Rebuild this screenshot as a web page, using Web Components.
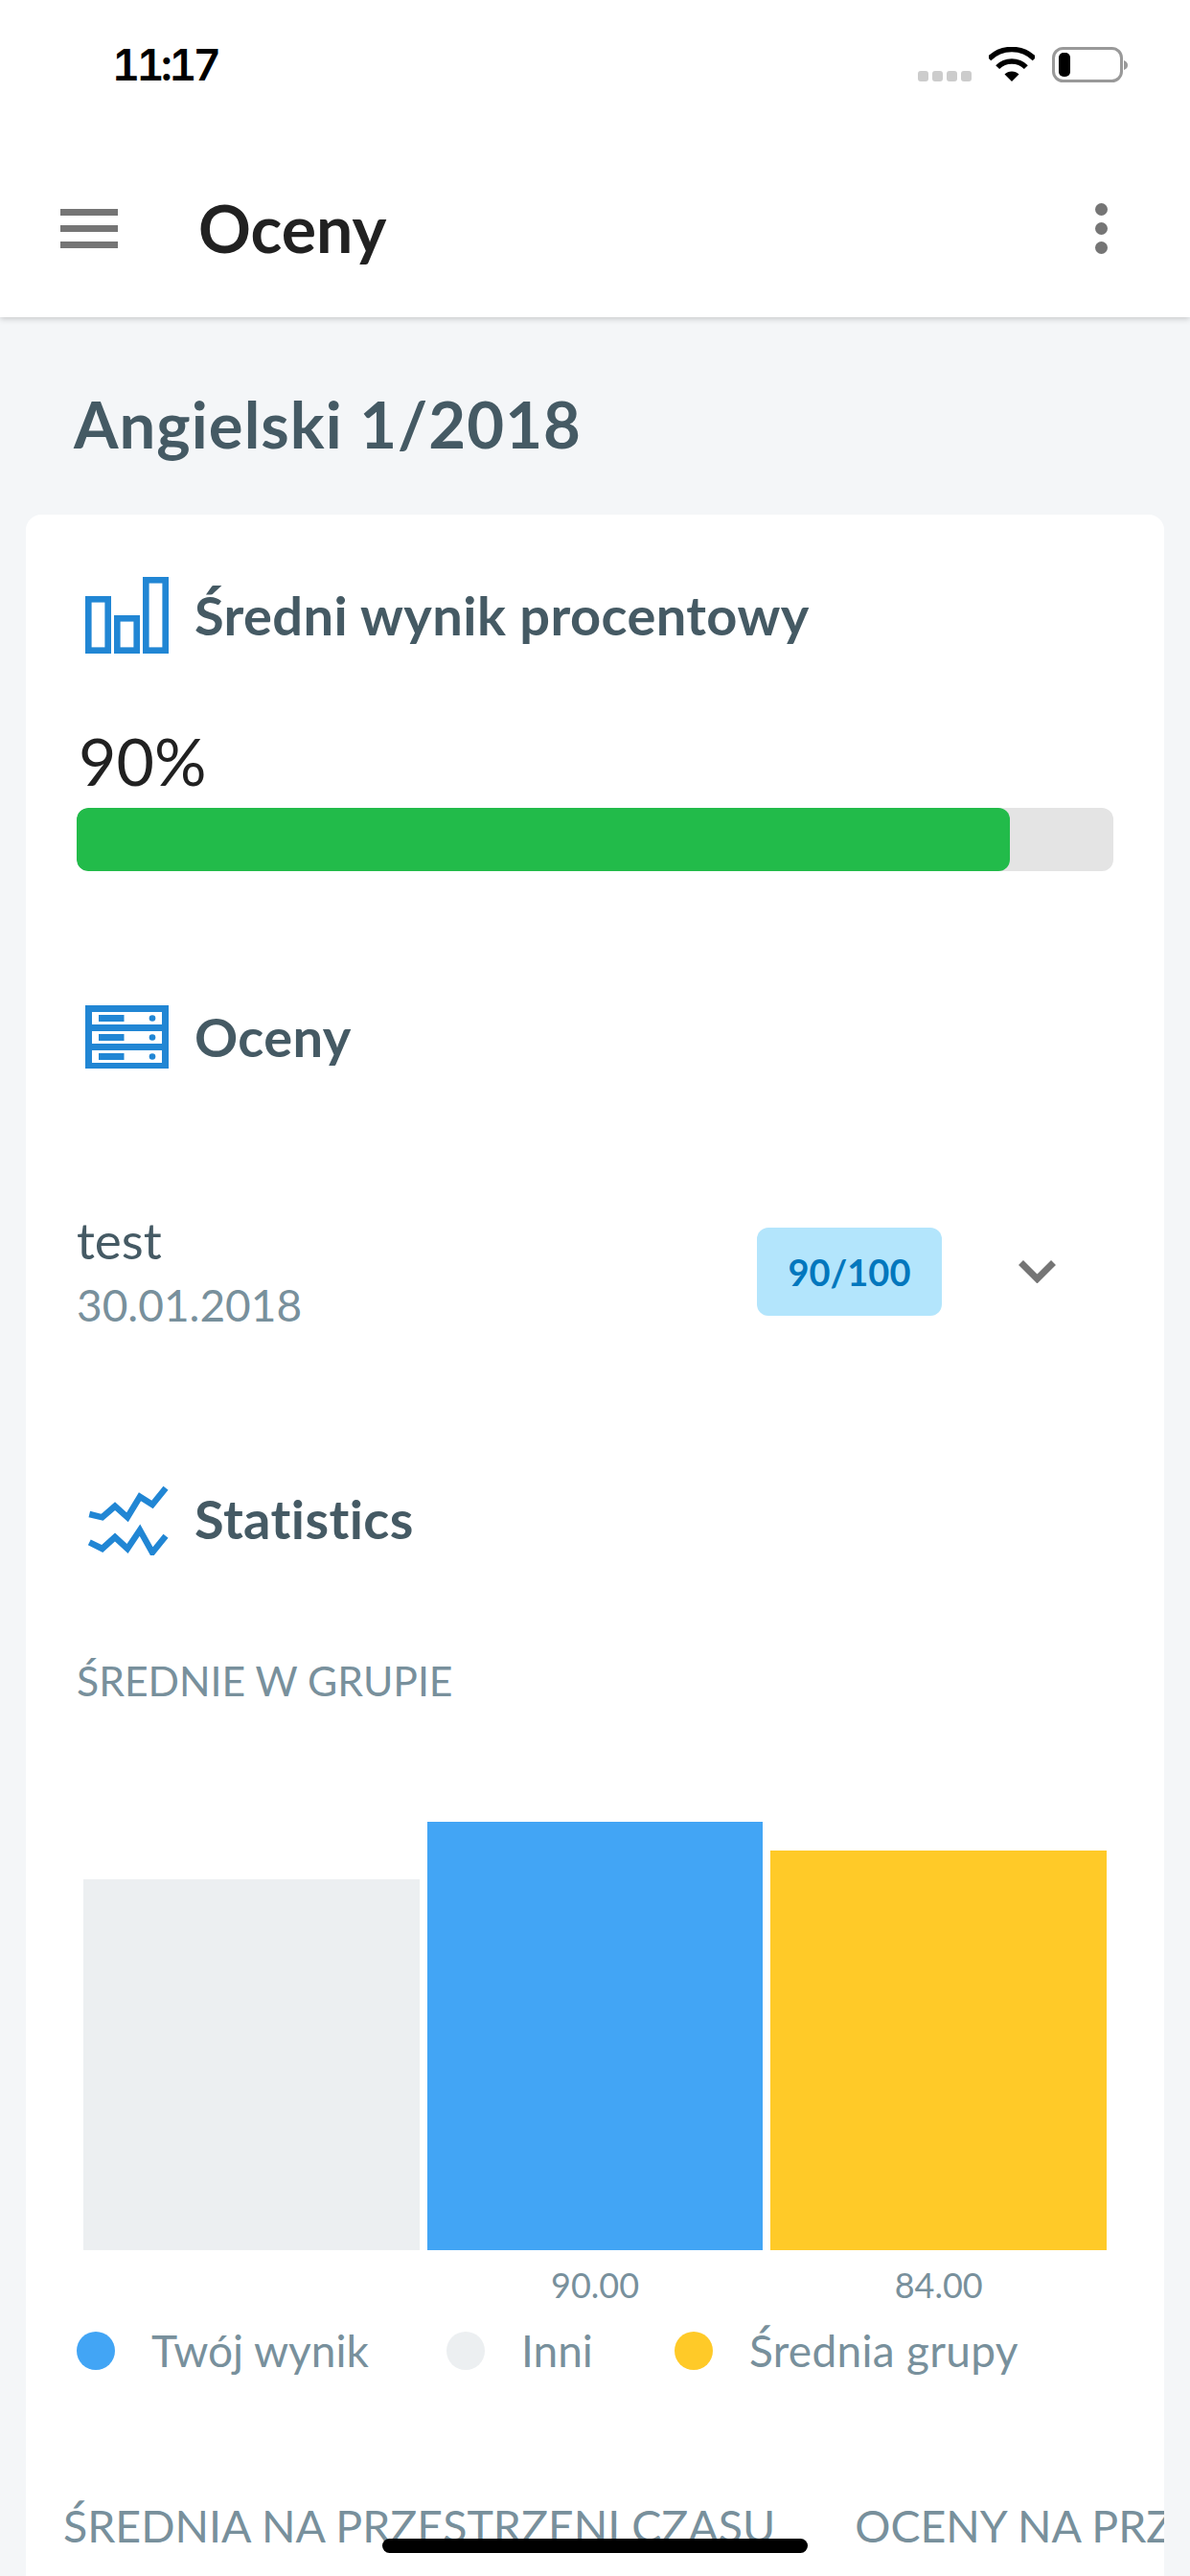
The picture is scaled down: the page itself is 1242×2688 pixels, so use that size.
<!DOCTYPE html>
<html lang="pl"><head><meta charset="utf-8"><title>Oceny</title>
<style>
html,body{margin:0;padding:0}
body{width:1242px;height:2688px;overflow:hidden;background:#f4f6f8;font-family:Lato,"Liberation Sans",sans-serif;position:relative;font-variant-ligatures:none}
</style></head><body>
<grades-screen>
  <ios-status time="11:17"></ios-status>
  <app-bar title="Oceny"></app-bar>
  <page-heading>Angielski 1/2018</page-heading>
  <app-card>
    <section-head style="height:100px;margin-top:55px">
      <svg slot="icon" width="87" height="80" viewBox="0 0 87 80" fill="none" stroke="#2186d4" stroke-width="6.6"><rect x="3.3" y="23.3" width="20.4" height="53.4"/><rect x="33.3" y="43.3" width="20.4" height="33.4"/><rect x="63.3" y="3.3" width="20.4" height="73.4"/></svg>
      Średni wynik procentowy
    </section-head>
    <score-bar value="90" style="margin-top:62px"></score-bar>
    <section-head style="height:100px;margin-top:123px">
      <svg slot="icon" width="87" height="66" viewBox="0 0 87 66"><rect width="87" height="66" fill="#2186d4"/><g fill="#fff"><rect x="7" y="7" width="73" height="13"/><rect x="7" y="27" width="73" height="13"/><rect x="7" y="47" width="73" height="13"/></g><g fill="#2186d4"><rect x="14" y="10" width="26.500" height="7"/><rect x="14" y="30" width="26.500" height="7"/><rect x="14" y="50" width="26.500" height="7"/><circle cx="70" cy="13.500" r="3.300"/><circle cx="70" cy="33.500" r="3.300"/><circle cx="70" cy="53.500" r="3.300"/></g></svg>
      Oceny
    </section-head>
    <grade-row name="test" date="30.01.2018" score="90/100" style="margin-top:132px"></grade-row>
    <section-head style="height:100px;margin-top:145px">
      <svg slot="icon" width="87" height="76" viewBox="0 0 87 76" fill="none" stroke="#2186d4" stroke-width="6.500"><polyline points="4.300,33 17.700,36.300 31,24.700 44,36.300 57,14.700 70,23 84,5.700"/><polyline points="4.300,62.300 17.700,69 31,57 44,69 57,49.700 70,73 84,55.700"/></svg>
      Statistics
    </section-head>
    <sub-label style="margin-top:94px">ŚREDNIE W GRUPIE</sub-label>
    <bar-chart style="margin-top:121px">
      <chart-bar height="387" color="#eceff1"></chart-bar>
      <chart-bar height="447" color="#42a5f5" label="90.00"></chart-bar>
      <chart-bar height="417" color="#ffca28" label="84.00"></chart-bar>
    </bar-chart>
    <chart-legend style="margin-top:13px">
      <legend-item color="#42a5f5" style="width:386px">Twój wynik</legend-item>
      <legend-item color="#eceff1" style="width:238px">Inni</legend-item>
      <legend-item color="#ffca28" style="letter-spacing:.3px">Średnia grupy</legend-item>
    </chart-legend>
    <tab-strip style="margin-top:122px">
      <span>ŚREDNIA NA PRZESTRZENI CZASU</span>
      <span>OCENY NA PRZESTRZENI CZASU</span>
    </tab-strip>
  </app-card>
</grades-screen>
<home-indicator></home-indicator>
<script>
const def=(name,css,html)=>customElements.define(name,class extends HTMLElement{
  constructor(){super();this.attachShadow({mode:'open'}).innerHTML='<style>'+css+'</style>'+(typeof html==='function'?'':html);}
  connectedCallback(){ if(typeof html==='function'){const s=this.shadowRoot.querySelector('style');this.shadowRoot.innerHTML='';this.shadowRoot.append(s);this.shadowRoot.append(document.createRange().createContextualFragment(html(this)));} }
});
def('grades-screen',':host{display:flex;flex-direction:column;height:2688px;overflow:hidden}','<slot></slot>');
def('ios-status',`:host{display:flex;height:132px;background:#fff;box-sizing:border-box;padding:44px 65px 0 117px;justify-content:space-between;align-items:flex-start;position:relative;z-index:1}
 .t{font:600 45px/48px Inter,"Liberation Sans",sans-serif;color:#000;font-variant-numeric:tabular-nums;font-feature-settings:"tnum";letter-spacing:-3.7px}
 .r{display:flex;align-items:flex-start;margin-top:5px}
 .sig{display:flex;gap:4px;margin-top:25px;margin-right:18px}.sig i{width:11px;height:11px;border-radius:3px;background:#ccc}
 svg{display:block}`,
 el=>`<span class="t">${el.getAttribute('time')}</span><div class="r"><div class="sig"><i></i><i></i><i></i><i></i></div>
 <svg width="48" height="36" viewBox="0 0 48 36" style="margin-right:18px"><g fill="none" stroke="#000" stroke-width="5.500"><path d="M.3 12.300A33.500 33.500 0 0 1 47.700 12.300"/><path d="M9.150 21.150A21 21 0 0 1 38.850 21.150"/></g><path d="M24 36 16.500 28.500A10.600 10.600 0 0 1 31.500 28.500Z"/></svg>
 <svg width="79" height="37" viewBox="0 0 79 37"><rect x="1.500" y="1.500" width="71" height="34" rx="10" fill="none" stroke="#999" stroke-width="3"/><rect x="7" y="6" width="12" height="25" rx="5"/><path d="M75 14c3 1 4 3 4 5s-1 4-4 5z" fill="#999"/></svg></div>`);
def('app-bar',`:host{display:flex;height:199px;background:#fff;align-items:center;box-sizing:border-box;padding:13px 0 0 63px;position:relative;box-shadow:0 2px 6px rgba(0,0,0,.18)}
 .m{display:flex;flex-direction:column;gap:10px;width:60px;margin-right:84px}.m i{height:7px;background:#757575;display:block}
 h1{margin:0;font:700 68px/70px Lato,sans-serif;color:#212121;flex:1}
 .d{display:flex;flex-direction:column;gap:7px;margin-right:86px}.d i{width:13px;height:13px;border-radius:50%;background:#757575;display:block}`,
 el=>`<div class="m"><i></i><i></i><i></i></div><h1>${el.getAttribute('title')}</h1><div class="d"><i></i><i></i><i></i></div>`);
def('page-heading',`:host{display:block;font:700 67px/80px Lato,sans-serif;color:#455a64;padding:71px 0 0 77px;height:206px;box-sizing:border-box;letter-spacing:1.05px}`,'<slot></slot>');
def('app-card',`:host{display:flow-root;margin:0 27px;background:#fff;border-radius:16px 16px 0 0;flex:1;overflow:hidden}`,'<slot></slot>');
def('section-head',`:host{display:flex;align-items:center;padding-left:62px;font:700 56px/70px Lato,sans-serif;color:#455a64;letter-spacing:.4px}
 .i{width:114px;flex:none;display:flex}`,'<div class="i"><slot name="icon"></slot></div><slot></slot>');
def('score-bar',`:host{display:block;padding:0 53px}
 .v{font:400 68px/80px Lato,sans-serif;color:#212121;margin-left:2px}
 .b{height:66px;background:#e4e4e4;border-radius:12px;overflow:hidden;margin-top:9px}.f{height:100%;background:#22bb4a;border-radius:12px}`,
 el=>`<div class="v">${el.getAttribute('value')}%</div><div class="b"><div class="f" style="width:${el.getAttribute('value')}%"></div></div>`);
def('grade-row',`:host{display:flex;align-items:center;padding-left:53px}
 .t{flex:1}.n{font:400 53px/60px Lato,sans-serif;color:#455a64}.d{font:400 46px/56px Lato,sans-serif;color:#78909c;margin-top:10px}
 .s{width:193px;height:92px;background:#b3e5fc;border-radius:12px;display:flex;align-items:center;justify-content:center;font:700 38px/1 Lato,sans-serif;color:#0277bd}
 svg{margin:0 113px 0 80px;display:block}`,
 el=>`<div class="t"><div class="n">${el.getAttribute('name')}</div><div class="d">${el.getAttribute('date')}</div></div><div class="s">${el.getAttribute('score')}</div><svg width="39" height="24" viewBox="0 0 39 24" fill="none" stroke="#757575" stroke-width="7"><path d="M2.500 2.500 19.500 19.500 36.500 2.500"/></svg>`);
def('sub-label',`:host{display:block;padding-left:53px;font:400 42.7px/50px Lato,sans-serif;color:#78909c}`,'<slot></slot>');
def('bar-chart',`:host{display:flex;align-items:flex-end;gap:8px;padding:0 60px;height:510px}`,'<slot></slot>');
def('chart-bar',`:host{flex:1;display:flex;flex-direction:column;justify-content:flex-end;align-items:stretch}
 .l{height:62px;box-sizing:border-box;padding-top:5px;font:400 36px/62px Lato,sans-serif;color:#78909c;text-align:center}`,
 el=>`<div style="height:${el.getAttribute('height')}px;background:${el.getAttribute('color')}"></div><div class="l">${el.getAttribute('label')||''}</div>`);
def('chart-legend',`:host{display:flex;align-items:center;padding-left:53px;height:60px}`,'<slot></slot>');
def('legend-item',`:host{display:flex;align-items:center;font:400 46px/60px Lato,sans-serif;color:#78909c;flex:none}
 i{width:40px;height:40px;border-radius:50%;margin-right:38px;display:block}`,
 el=>`<i style="background:${el.getAttribute('color')}"></i><slot></slot>`);
def('tab-strip',`:host{display:flex;gap:83px;padding-left:39px;font:400 46.5px/60px Lato,sans-serif;color:#78909c;white-space:nowrap;overflow:hidden}`,'<slot></slot>');
def('home-indicator',`:host{position:absolute;left:399px;top:2649px;width:444px;height:15px;border-radius:8px;background:#000;display:block}`,'');
</script>
</body></html>
